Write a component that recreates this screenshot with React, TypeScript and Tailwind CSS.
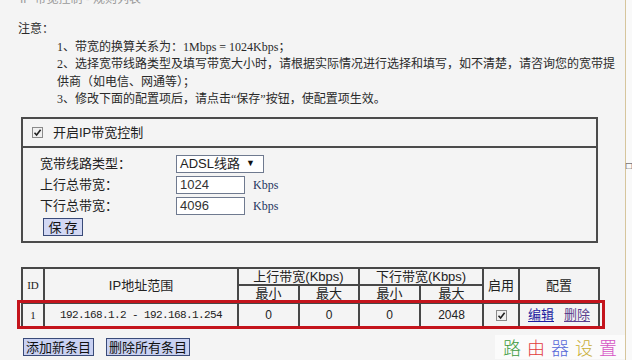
import React from 'react';

const cn = "font-['Liberation_Sans','Noto_Sans_CJK_SC',sans-serif]";
const song = "font-['Liberation_Serif','Noto_Sans_CJK_SC',serif]";

const notes = [
    '1、带宽的换算关系为：1Mbps = 1024Kbps；',
    '2、选择宽带线路类型及填写带宽大小时，请根据实际情况进行选择和填写，如不清楚，请咨询您的宽带提',
    '供商（如电信、网通等）；',
    '3、修改下面的配置项后，请点击“保存”按钮，使配置项生效。',
];

const Check = () => (
    <span className="inline-flex items-center justify-center w-[11px] h-[11px] border border-[#8a8a8a] bg-[#f0f0f0]">
        <svg width="9" height="9" viewBox="0 0 9 9">
            <path d="M1.5 4.8 L3.6 7 L7.6 1.8" fill="none" stroke="#222" strokeWidth="1.6" />
        </svg>
    </span>
);

const FormRow = ({ label, children }: { label: string; children: React.ReactNode }) => (
    <div className="flex items-center h-[17px]">
        <span className={`w-[136px] text-[13px] text-[#222] ${cn}`}>{label}</span>
        {children}
    </div>
);

const NumInput = ({ value }: { value: string }) => (
    <div className="flex items-center">
        <div className="w-[69px] h-[18px] border border-[#6f7a8f] bg-white px-[3px] text-[13px] leading-[16px] text-[#333] font-['Liberation_Sans',sans-serif]">
            {value}
        </div>
        <span className="ml-[8px] text-[12px] text-[#1f3560] font-['Liberation_Serif',serif]">Kbps</span>
    </div>
);

const th = 'border-2 border-[#474747] text-center font-normal p-0';

export default function App() {
    return (
        <div className={`w-[632px] h-[360px] overflow-hidden bg-[#f4f4f4] flex ${cn}`}>
            <div className="w-[627px] h-full border-r border-[#d6c59c] flex flex-col">
                {/* cut off title */}
                <div className="h-[4px] overflow-hidden pl-[20px]">
                    <p className="-mt-[10px] text-[12px] text-[#9a9a9a]">IP 带宽控制 - 规则列表</p>
                </div>

                {/* notes */}
                <div className={`h-[113px] pt-[17px] text-[12px] leading-[17.5px] text-[#2a2a2a] ${song}`}>
                    <p className="pl-[18px]">注意：</p>
                    {notes.map((n, i) => (
                        <p key={i} className="pl-[57px] whitespace-nowrap">{n}</p>
                    ))}
                </div>

                {/* bandwidth panel */}
                <div className="ml-[21px] w-[577px] h-[126px] border-2 border-[#4b4b4b] flex flex-col">
                    <div className="h-[29px] border-b-2 border-[#4b4b4b] flex items-center pl-[9px] gap-[10px]">
                        <Check />
                        <span className="text-[13px] text-[#222]">开启IP带宽控制</span>
                    </div>
                    <div className="flex flex-col gap-[4px] pt-[7px] pl-[17px]">
                        <FormRow label="宽带线路类型：">
                            <div className="w-[88px] h-[18px] border border-[#6f7a8f] bg-white flex items-center justify-between px-[3px]">
                                <span className="text-[13px] text-[#222] leading-none">ADSL线路</span>
                                <span className="text-[9px] text-[#111] pr-[5px]">▼</span>
                            </div>
                        </FormRow>
                        <FormRow label="上行总带宽：">
                            <NumInput value="1024" />
                        </FormRow>
                        <FormRow label="下行总带宽：">
                            <NumInput value="4096" />
                        </FormRow>
                        <div className="h-[17px] flex">
                            <button className="ml-[3px] w-[40px] h-[18px] border border-[#394a78] bg-[#d2d8f4] text-[13px] leading-none text-[#111] tracking-[3px] pl-[3px]">
                                保存
                            </button>
                        </div>
                    </div>
                </div>

                {/* rules table */}
                <div className="relative ml-[21px] mt-[24px] w-[577px]">
                    <table className="w-[577px] border-collapse table-fixed bg-[#f4f4f4] text-[13px] text-[#222]">
                        <colgroup>
                            <col className="w-[22px]" />
                            <col className="w-[194px]" />
                            <col className="w-[61px]" />
                            <col className="w-[60px]" />
                            <col className="w-[61px]" />
                            <col className="w-[63px]" />
                            <col className="w-[36px]" />
                            <col className="w-[80px]" />
                        </colgroup>
                        <thead>
                            <tr className="h-[17px]">
                                <th rowSpan={2} className={`${th} text-[11px] font-['Liberation_Serif',serif]`}>ID</th>
                                <th rowSpan={2} className={th}>IP地址范围</th>
                                <th colSpan={2} className={`${th} leading-[14px]`}>上行带宽(Kbps)</th>
                                <th colSpan={2} className={`${th} leading-[14px]`}>下行带宽(Kbps)</th>
                                <th rowSpan={2} className={th}>启用</th>
                                <th rowSpan={2} className={th}>配置</th>
                            </tr>
                            <tr className="h-[18px]">
                                <th className={`${th} leading-[14px]`}>最小</th>
                                <th className={`${th} leading-[14px]`}>最大</th>
                                <th className={`${th} leading-[14px]`}>最小</th>
                                <th className={`${th} leading-[14px]`}>最大</th>
                            </tr>
                        </thead>
                        <tbody>
                            <tr className="h-[24px] text-center">
                                <td className={`${th} text-[11px] font-['Liberation_Serif',serif]`}>1</td>
                                <td className={`${th} text-[11px] tracking-[-0.6px] font-['Liberation_Mono',monospace]`}>
                                    192.168.1.2 - 192.168.1.254
                                </td>
                                <td className={`${th} text-[12px] font-['Liberation_Sans',sans-serif]`}>0</td>
                                <td className={`${th} text-[12px] font-['Liberation_Sans',sans-serif]`}>0</td>
                                <td className={`${th} text-[12px] font-['Liberation_Sans',sans-serif]`}>0</td>
                                <td className={`${th} text-[12px] font-['Liberation_Sans',sans-serif]`}>2048</td>
                                <td className={th}>
                                    <div className="flex justify-center">
                                        <Check />
                                    </div>
                                </td>
                                <td className={th}>
                                    <span className="text-[#1c1ca0] underline underline-offset-2">编辑</span>
                                    <span className="ml-[10px] text-[#5b3f8e] underline underline-offset-2">删除</span>
                                </td>
                            </tr>
                        </tbody>
                    </table>
                    {/* highlight box */}
                    <div className="absolute left-[-4px] top-[33px] w-[588px] h-[29px] border-[3px] border-[#c4141c] pointer-events-none" />
                </div>

                {/* buttons + watermark */}
                <div className="mt-[10px] flex items-start justify-between pl-[23px]">
                    <div className="flex gap-[12px]">
                        <button className="h-[18px] px-[2px] border border-[#394a78] bg-[#c9d1f2] text-[13px] leading-none text-[#111]">
                            添加新条目
                        </button>
                        <button className="h-[18px] px-[2px] border border-[#394a78] bg-[#c9d1f2] text-[13px] leading-none text-[#111]">
                            删除所有条目
                        </button>
                    </div>
                    <div className="flex gap-[6px] bg-[#fbfbfb] pl-[8px] pr-[8px] -mt-[3px] text-[18px] leading-[24px] font-['Noto_Sans_CJK_SC',serif] font-light">
                        <span className="text-[#3e9b3e]">路</span>
                        <span className="text-[#e23a3a]">由</span>
                        <span className="text-[#5668d8]">器</span>
                        <span className="text-[#c9ae35]">设</span>
                        <span className="text-[#d653c4]">置</span>
                    </div>
                </div>
            </div>
            <div className="flex-1 bg-[#f9f9f9] pt-[152px]">
                <span className="text-[10px] text-[#333] leading-none">□</span>
            </div>
        </div>
    );
}
